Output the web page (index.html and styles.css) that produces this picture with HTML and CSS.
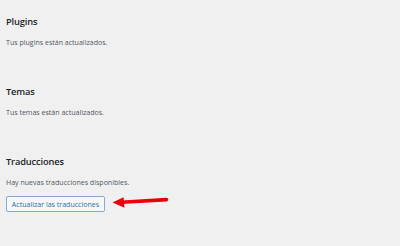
FILE: index.html
```html
<!DOCTYPE html>
<html lang="es">
<head>
<meta charset="utf-8">
<link rel="stylesheet" href="styles.css">
</head>
<body>
<div class="wrap">
  <section class="sec">
    <h2 class="title">Plugins</h2>
    <p class="text">Tus plugins están actualizados.</p>
  </section>
  <section class="sec">
    <h2 class="title">Temas</h2>
    <p class="text">Tus temas están actualizados.</p>
  </section>
  <section class="sec">
    <h2 class="title">Traducciones</h2>
    <p class="text">Hay nuevas traducciones disponibles.</p>
    <div class="actions">
      <button class="btn" type="button">Actualizar las traducciones</button>
      <svg class="arrow" width="57" height="12" viewBox="0 0 57 12" aria-hidden="true">
        <line x1="10" y1="5.2" x2="54.5" y2="2.6" stroke="#e8000b" stroke-width="3.6" stroke-linecap="round"/>
        <polygon points="0.5,5.6 11.5,0.3 12.5,10.8" fill="#e8000b"/>
      </svg>
    </div>
  </section>
</div>
</body>
</html>
```
FILE: styles.css
```css
html, body {
  margin: 0;
  padding: 0;
  background: #f0f0f1;
}
body {
  font-family: "Open Sans", "Noto Sans", sans-serif;
  color: #3c434a;
}
.wrap {
  padding: 16px 6px 0 6px;
}
.sec {
  margin-bottom: 39px;
}
.title {
  margin: 0;
  font-size: 9.3px;
  line-height: 12px;
  font-weight: 600;
  color: #1d2327;
  letter-spacing: -0.15px;
}
.text {
  margin: 9px 0 0 0;
  font-size: 7.05px;
  line-height: 10px;
  color: #50575e;
  letter-spacing: 0;
}
.actions {
  display: flex;
  align-items: center;
  margin-top: 9px;
}
.btn {
  box-sizing: border-box;
  width: 99px;
  height: 16px;
  padding: 0;
  margin: 0;
  border: 1px solid #86aad0;
  border-radius: 2px;
  background: #f6f7f7;
  color: #2f6ea8;
  font-family: "Open Sans", "Noto Sans", sans-serif;
  font-size: 7.05px;
  letter-spacing: 0;
  line-height: 14px;
  text-align: center;
}
.arrow {
  display: block;
  margin-left: 7px;
  margin-top: -3px;
}
```
